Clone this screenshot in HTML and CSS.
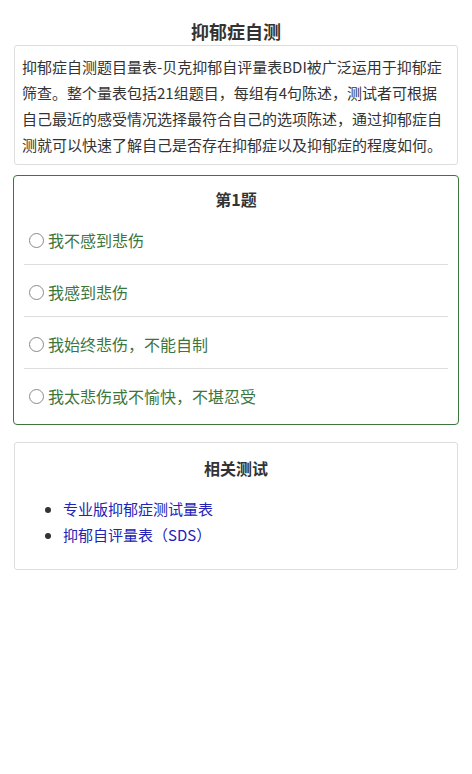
FILE: index.html
```html
<!DOCTYPE html>
<html lang="zh-CN">
<head>
<meta charset="utf-8">
<title>抑郁症自测</title>
<link rel="stylesheet" href="styles.css">
</head>
<body>
<div class="page">
  <h1 class="page-title">抑郁症自测</h1>
  <div class="intro">抑郁症自测题目量表-贝克抑郁自评量表BDI被广泛运用于抑郁症筛查。整个量表包括21组题目，每组有4句陈述，测试者可根据自己最近的感受情况选择最符合自己的选项陈述，通过抑郁症自测就可以快速了解自己是否存在抑郁症以及抑郁症的程度如何。</div>
  <div class="quiz">
    <h2 class="quiz-title">第1题</h2>
    <ul class="options">
      <li class="option"><span class="radio"></span>我不感到悲伤</li>
      <li class="option"><span class="radio"></span>我感到悲伤</li>
      <li class="option"><span class="radio"></span>我始终悲伤，不能自制</li>
      <li class="option"><span class="radio"></span>我太悲伤或不愉快，不堪忍受</li>
    </ul>
  </div>
  <div class="related">
    <h2 class="related-title">相关测试</h2>
    <ul class="related-list">
      <li><a href="#">专业版抑郁症测试量表</a></li>
      <li><a href="#">抑郁自评量表（SDS）</a></li>
    </ul>
  </div>
</div>
</body>
</html>
```

FILE: styles.css
```css
html, body {
  margin: 0;
  padding: 0;
  background: #fff;
}
body {
  font-family: "Noto Sans CJK SC", "Liberation Sans", sans-serif;
  color: #333;
}
.page {
  display: flex;
  flex-direction: column;
}
.page-title {
  margin: 0;
  padding-top: 17px;
  font-size: 18px;
  line-height: 28px;
  font-weight: bold;
  text-align: center;
  color: #333;
}
.intro {
  margin: 0 14px;
  padding: 8px 7px 6px 7px;
  border: 1px solid #ddd;
  border-radius: 3px;
  font-size: 15px;
  line-height: 26px;
  color: #333;
}
.quiz {
  margin: 10px 13px 0;
  padding: 0 10px 4px;
  border: 1px solid #3c763d;
  border-radius: 4px;
}
.quiz-title {
  margin: 0 0 2px;
  padding-top: 11px;
  font-size: 16px;
  line-height: 24px;
  font-weight: bold;
  text-align: center;
  color: #333;
}
.options {
  list-style: none;
  margin: 0;
  padding: 0;
}
.option {
  display: flex;
  align-items: center;
  padding: 15px 0 12px 5px;
  font-size: 16px;
  line-height: 24px;
  color: #3c763d;
  border-bottom: 1px solid #ddd;
}
.option:last-child {
  border-bottom: none;
  padding-bottom: 12px;
}
.radio {
  width: 15px;
  height: 15px;
  box-sizing: border-box;
  border: 1px solid #8a8a8a;
  border-radius: 50%;
  margin-right: 4px;
  flex: none;
}
.related {
  margin: 17px 14px 0;
  padding: 0 8px;
  border: 1px solid #ddd;
  border-radius: 3px;
}
.related-title {
  margin: 0;
  padding-top: 13px;
  font-size: 16px;
  line-height: 24px;
  font-weight: bold;
  text-align: center;
  color: #333;
}
.related-list {
  margin: 16px 0 21px;
  padding-left: 40px;
  font-size: 15px;
  line-height: 26px;
}
.related-list a {
  color: #2323b5;
  text-decoration: none;
}
```
